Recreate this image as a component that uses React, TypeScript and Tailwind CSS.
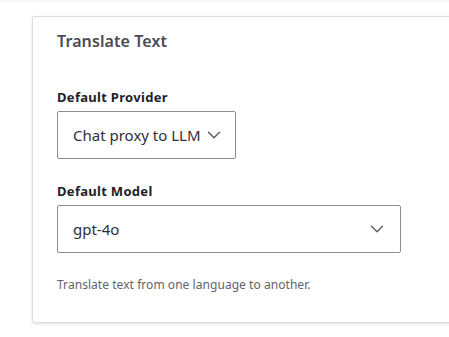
import React from "react";

function Chevron({ className = "" }: { className?: string }) {
  return (
    <svg
      viewBox="0 0 24 24"
      width="22"
      height="22"
      fill="none"
      stroke="#5f5f66"
      strokeWidth="1.6"
      strokeLinecap="round"
      strokeLinejoin="round"
      className={className}
    >
      <path d="m6 9 6 6 6-6" />
    </svg>
  );
}

export default function App() {
  return (
    <div
      className="w-[449px] h-[337px] bg-white overflow-hidden relative"
      style={{ fontFamily: '"Noto Sans", "Open Sans", sans-serif' }}
    >
      <div className="h-[2px] bg-[#f7f7f8]" />
      <div className="pt-[14px] pl-[32px]">
        <div className="w-[440px] h-[307px] border border-[#dcdce6] rounded-[2px] bg-white shadow-[0_1px_3px_rgba(0,0,0,0.12)] pl-[24px] pt-[12px]">
          <div className="text-[16px] leading-[24px] font-semibold text-[#4a4a55] tracking-[0.1px]">
            Translate Text
          </div>
          <div className="mt-[34px] text-[13px] leading-[20px] font-bold text-[#222226] tracking-[0.3px]">
            Default Provider
          </div>
          <div className="mt-[4px] w-[179px] h-[48px] border border-[#8d8d93] rounded-[2px] flex items-center pl-[15px] gap-[2px] overflow-hidden">
            <span className="text-[15px] text-[#2f2f38] whitespace-nowrap">
              Chat proxy to LLM
            </span>
            <Chevron className="shrink-0" />
          </div>
          <div className="mt-[22px] text-[13px] leading-[20px] font-bold text-[#222226] tracking-[0.3px]">
            Default Model
          </div>
          <div className="mt-[4px] w-[344px] h-[48px] border border-[#8d8d93] rounded-[2px] flex items-center justify-between pl-[15px] pr-[12px]">
            <span className="text-[15px] text-[#2f2f38]">gpt-4o</span>
            <Chevron />
          </div>
          <div className="mt-[24px] text-[12px] leading-[16px] text-[#62626e] tracking-[0.05px]">
            Translate text from one language to another.
          </div>
        </div>
      </div>
    </div>
  );
}
